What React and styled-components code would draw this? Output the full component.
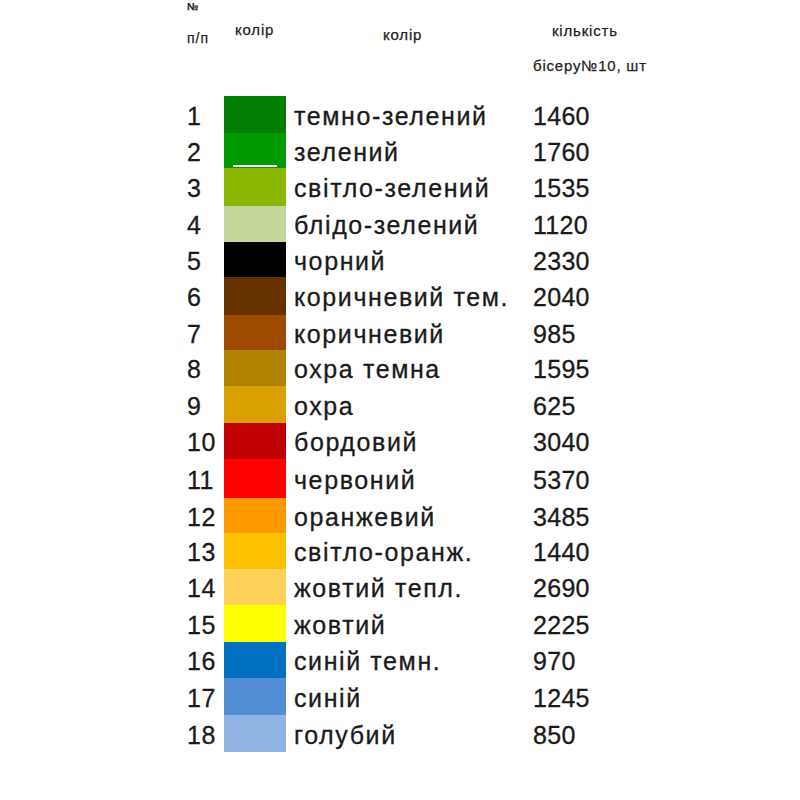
import React from "react";
import styled, { createGlobalStyle } from "styled-components";

const Global = createGlobalStyle`
  html, body { margin: 0; padding: 0; background: #ffffff; }
  body { font-family: "Liberation Sans", Arial, sans-serif; color: #1a1a1a; }
`;

const Page = styled.div`
  width: 800px;
  height: 800px;
  box-sizing: border-box;
  padding-left: 187px;
  background: #fff;
  overflow: hidden;
`;

const cols = "37px 62px 247px 180px";

const Header = styled.div`
  display: grid;
  grid-template-columns: ${cols};
  height: 96px;
  font-size: 15px;
  letter-spacing: 0.8px;
  color: #222;
  -webkit-text-stroke: 0.25px #222;
`;

const NumHead = styled.div`
  display: flex;
  flex-direction: column;
  font-size: 14px;
  letter-spacing: 1px;
`;

const NoSign = styled.span`
  font-size: 10px;
  font-weight: bold;
  line-height: 10px;
  margin-top: 2px;
`;

const PP = styled.span`
  line-height: 14px;
  margin-top: 19px;
`;

const HeadCell = styled.div`
  padding-left: ${(p) => p.$left}px;
  padding-top: ${(p) => p.$top}px;
  line-height: 15px;
  white-space: nowrap;
`;

const CountHead = styled.div`
  display: flex;
  flex-direction: column;
  white-space: nowrap;
  line-height: 15px;
`;

const CountLine = styled.span`
  padding-left: ${(p) => p.$left}px;
  margin-top: ${(p) => p.$top}px;
`;

const Table = styled.div`
  display: grid;
  grid-template-columns: ${cols};
  font-size: 25px;
  color: #1a1a1a;
  -webkit-text-stroke: 0.3px #1a1a1a;
`;

const Row = styled.div`
  display: contents;
`;

const Cell = styled.div`
  height: ${(p) => p.$h}px;
  box-sizing: border-box;
  padding-top: 3px;
  display: flex;
  align-items: center;
  white-space: nowrap;
`;

const NumCell = styled(Cell)`
  letter-spacing: 0.5px;
`;

const Swatch = styled.div`
  height: ${(p) => p.$h}px;
  background: ${(p) => p.$color};
  position: relative;
`;

const Divider = styled.span`
  position: absolute;
  left: 9px;
  width: 44px;
  bottom: 1px;
  height: 2px;
  background: #ffffff;
`;

const NameCell = styled(Cell)`
  padding-left: 8px;
  letter-spacing: 1.6px;
`;

const CountCell = styled(Cell)`
  letter-spacing: 0.3px;
`;

const rows = [
  [1, "#037d03", "темно-зелений", 1460, 37],
  [2, "#009900", "зелений", 1760, 35],
  [3, "#8bb700", "світло-зелений", 1535, 38],
  [4, "#c4d79b", "блідо-зелений", 1120, 36],
  [5, "#000000", "чорний", 2330, 35],
  [6, "#663300", "коричневий тем.", 2040, 38],
  [7, "#9e4b00", "коричневий", 985, 35],
  [8, "#b08400", "охра темна", 1595, 36],
  [9, "#d8a000", "охра", 625, 37],
  [10, "#c00000", "бордовий", 3040, 36],
  [11, "#ff0000", "червоний", 5370, 39],
  [12, "#fe9a00", "оранжевий", 3485, 35],
  [13, "#ffc000", "світло-оранж.", 1440, 36],
  [14, "#fed25a", "жовтий тепл.", 2690, 36],
  [15, "#ffff00", "жовтий", 2225, 37],
  [16, "#0070c0", "синій темн.", 970, 36],
  [17, "#538dd5", "синій", 1245, 37],
  [18, "#8db4e2", "голубий", 850, 37],
];

export default function App() {
  return (
    <>
      <Global />
      <Page>
        <Header>
          <NumHead>
            <NoSign>№</NoSign>
            <PP>п/п</PP>
          </NumHead>
          <HeadCell $left={11} $top={22}>колір</HeadCell>
          <HeadCell $left={97} $top={27}>колір</HeadCell>
          <CountHead>
            <CountLine $left={19} $top={23}>кількість</CountLine>
            <CountLine $left={0} $top={20}>бісеру№10, шт</CountLine>
          </CountHead>
        </Header>
        <Table>
          {rows.map(([n, color, name, count, h]) => (
            <Row key={n}>
              <NumCell $h={h}>{n}</NumCell>
              <Swatch $h={h} $color={color}>
                {n === 2 && <Divider />}
              </Swatch>
              <NameCell $h={h}>{name}</NameCell>
              <CountCell $h={h}>{count}</CountCell>
            </Row>
          ))}
        </Table>
      </Page>
    </>
  );
}
